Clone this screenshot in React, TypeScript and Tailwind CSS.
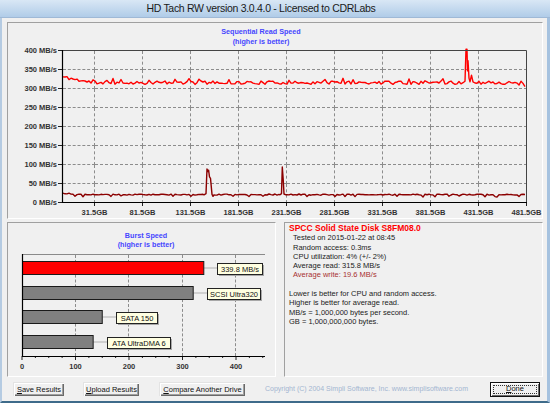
import React from 'react';

// seeded noise so the traces look the same on every load
function rng(seed: number) {
  let s = seed;
  return () => {
    s = (s + 0x6d2b79f5) | 0;
    let t = Math.imul(s ^ (s >>> 15), 1 | s);
    t = (t + Math.imul(t ^ (t >>> 7), 61 | t)) ^ t;
    return ((t ^ (t >>> 14)) >>> 0) / 4294967296;
  };
}

// page coords -> chart coords (panel content starts at 8,24)
const toY = (v: number) => 203 - v * 0.38 - 24;

function readTrace() {
  const r = rng(11);
  const pts: [number, number][] = [];
  for (let x = 63; x <= 526; x += 2) {
    if (x >= 463 && x <= 474) continue;
    let v = 314 + (r() - 0.5) * 9;
    if (x < 92) v += ((92 - x) / 29) * 15;
    if (x > 505) v -= ((x - 505) / 21) * 6;
    if (r() < 0.09) v += 6 + r() * 5;
    pts.push([x, v]);
  }
  const spike: [number, number][] = [
    [463, 314], [465, 318], [466, 402], [467, 402], [467.5, 345], [468, 372],
    [469, 326], [470, 316], [471.5, 334], [473, 316],
  ];
  return [...pts, ...spike].sort((a, b) => a[0] - b[0]);
}

function writeTrace() {
  const r = rng(5);
  const pts: [number, number][] = [];
  for (let x = 63; x <= 526; x += 2) {
    if ((x >= 204 && x <= 214) || (x >= 280 && x <= 286)) continue;
    let v = 19.5 + (r() - 0.5) * 3;
    if (x < 70) v += 3;
    if (r() < 0.07) v -= 5;
    pts.push([x, v]);
  }
  const spikes: [number, number][] = [
    [204, 19], [206, 22], [207, 87], [208, 80], [208.6, 84], [209.5, 66], [210.5, 62],
    [212, 20], [213, 15], [214, 19],
    [280, 19], [281.5, 22], [282.3, 92], [283.2, 60], [284, 21], [286, 19],
  ];
  return [...pts, ...spikes].sort((a, b) => a[0] - b[0]);
}

const path = (pts: [number, number][]) =>
  pts.map(([x, v], i) => `${i ? 'L' : 'M'}${x - 8} ${toY(v).toFixed(1)}`).join(' ');

const readPath = path(readTrace());
const writePath = path(writeTrace());

const yLabels = [400, 350, 300, 250, 200, 150, 100, 50, 0];
const xLabels = ['31.5GB', '81.5GB', '131.5GB', '181.5GB', '231.5GB', '281.5GB', '331.5GB', '381.5GB', '431.5GB', '481.5GB'];
const font = "'Liberation Sans', Arial, sans-serif";

// dashed grid cells behind the read plot: 8 rows x 10 columns
function ReadGrid() {
  const cells: React.ReactElement[] = [];
  for (let r = 0; r < 8; r++) {
    for (let c = 0; c < 10; c++) {
      const right = c < 9;
      const bottom = r < 7;
      const cls = right && bottom
        ? 'border-r border-b border-dashed border-[#8c8c8c]'
        : right
          ? 'border-r border-dashed border-[#8c8c8c]'
          : bottom
            ? 'border-b border-dashed border-[#8c8c8c]'
            : '';
      cells.push(<div key={`${r}-${c}`} className={cls} />);
    }
  }
  return (
    <div className="col-start-1 row-start-1 self-start justify-self-start ml-[55px] mt-[28px] grid grid-cols-[32px_repeat(9,48px)] grid-rows-[repeat(8,19px)]">
      {cells}
    </div>
  );
}

function ReadChart() {
  return (
    <div className="grid">
      <ReadGrid />
      <svg width={534} height={195} className="block col-start-1 row-start-1" fontFamily={font}>
        <text x={253} y={11} textAnchor="middle" fontSize={7.2} fill="#4646ff" fontWeight={600}>
          Sequential Read Speed
        </text>
        <text x={253} y={21} textAnchor="middle" fontSize={7.2} fill="#4646ff" fontWeight={600}>
          (higher is better)
        </text>

        {yLabels.map((v, i) => {
          const y = 27.5 + i * 19;
          return (
            <g key={v}>
              <text x={49} y={y} dy="0.35em" textAnchor="end" fontSize={7.5} fill="#333" fontWeight={600}>
                {v} MB/s
              </text>
              <line x1={50} x2={54} y1={y} y2={y} stroke="#222" />
            </g>
          );
        })}

        {xLabels.map((l, i) => {
          const x = 86.5 + i * 48;
          return (
            <g key={l}>
              <line x1={x} x2={x} y1={179} y2={183} stroke="#222" />
              <text x={x} y={189} dy="0.35em" textAnchor="middle" fontSize={7.5} fill="#333" fontWeight={600}>
                {l}
              </text>
            </g>
          );
        })}

        <path d={readPath} fill="none" stroke="#ff0000" strokeWidth={1.4} strokeLinejoin="round" />
        <path d={writePath} fill="none" stroke="#8b0000" strokeWidth={1.4} strokeLinejoin="round" />

        <line x1={54.5} x2={518.5} y1={27.5} y2={27.5} stroke="#444" />
        <line x1={518.5} x2={518.5} y1={27.5} y2={179.5} stroke="#444" />
        <line x1={54.5} x2={54.5} y1={27} y2={179.5} stroke="#000" strokeWidth={1.2} />
        <line x1={54} x2={519} y1={179.5} y2={179.5} stroke="#000" strokeWidth={1.2} />
      </svg>
    </div>
  );
}

// burst chart in panel coords (content origin at page 8,224)
const bx = (v: number) => 14 + v * 0.535;

const bars = [
  { v: 339.8, y: 38, fill: '#ff0000', label: '339.8 MB/s', lx: 209, lw: 45 },
  { v: 320, y: 63, fill: '#808080', label: 'SCSI Ultra320', lx: 199, lw: 53 },
  { v: 150, y: 87, fill: '#808080', label: 'SATA 150', lx: 108, lw: 41 },
  { v: 133, y: 112, fill: '#808080', label: 'ATA UltraDMA 6', lx: 99, lw: 63 },
];

function BurstChart() {
  return (
    <div className="grid">
      <div className="col-start-1 row-start-1 self-start justify-self-start ml-[15px] mt-[32px] h-[101px] flex">
        <div className="w-[53px] border-r border-dashed border-[#8c8c8c]" />
        <div className="w-[53px] border-r border-dashed border-[#8c8c8c]" />
        <div className="w-[54px] border-r border-dashed border-[#8c8c8c]" />
        <div className="w-[53px] border-r border-dashed border-[#8c8c8c]" />
      </div>
      <svg width={267} height={153} className="block col-start-1 row-start-1" fontFamily={font}>
        <text x={138} y={12} dy="0.35em" textAnchor="middle" fontSize={7.2} fill="#4646ff" fontWeight={600}>
          Burst Speed
        </text>
        <text x={138} y={21.5} dy="0.35em" textAnchor="middle" fontSize={7.2} fill="#4646ff" fontWeight={600}>
          (higher is better)
        </text>

        <line x1={14} x2={257} y1={31.5} y2={31.5} stroke="#8a8a8a" />
        {Array.from({ length: 19 }, (_, i) => i * 25).map((v) => (
          <line key={v} x1={bx(v)} x2={bx(v)} y1={133} y2={v % 100 === 0 ? 137 : 135} stroke="#222" />
        ))}
        {[0, 100, 200, 300, 400].map((v) => (
          <text key={v} x={bx(v)} y={143} dy="0.35em" textAnchor="middle" fontSize={7.5} fill="#333" fontWeight={600}>
            {v}
          </text>
        ))}

        {bars.map((b) => (
          <g key={b.label}>
            <line x1={bx(b.v)} x2={b.lx} y1={b.y + 7} y2={b.y + 7} stroke="#b0b0b0" />
            <rect x={14.5} y={b.y + 0.5} width={bx(b.v) - 14.5} height={13} fill={b.fill} stroke="#1a1a1a" />
            <rect x={b.lx + 2} y={b.y + 4} width={b.lw} height={11} fill="#a8a8a8" />
            <rect x={b.lx + 0.5} y={b.y + 2.5} width={b.lw} height={11} fill="#ffffe1" stroke="#222" />
            <text x={b.lx + b.lw / 2 + 0.5} y={b.y + 8} dy="0.35em" textAnchor="middle" fontSize={7.5} fill="#111">
              {b.label}
            </text>
          </g>
        ))}

        <line x1={14.5} x2={14.5} y1={31} y2={133.5} stroke="#000" strokeWidth={1.2} />
        <line x1={14} x2={257} y1={133.5} y2={133.5} stroke="#000" strokeWidth={1.2} />
      </svg>
    </div>
  );
}

function Btn({ first, rest, className }: { first: string; rest: string; className?: string }) {
  return (
    <div
      className={
        'h-[14px] flex items-center justify-center bg-[#f0f0f0] text-[7.5px] text-[#111] shadow-[inset_1px_1px_#fff,inset_-1px_-1px_#696969,inset_-2px_-2px_#a0a0a0] border-t border-l border-[#e3e3e3] ' +
        (className ?? '')
      }
    >
      <span>
        <span className="underline">{first}</span>
        {rest}
      </span>
    </div>
  );
}

const panel = 'border-t border-l border-[#a0a0a0] border-b border-r border-b-white border-r-white';

export default function App() {
  return (
    <div className="w-[550px] h-[403px] overflow-hidden flex flex-col bg-[#f0f0f0] font-['Liberation_Sans',Arial,sans-serif]">
      <div className="h-[18px] shrink-0 flex items-center justify-center pr-[28px] bg-gradient-to-b from-[#d9e7f5] to-[#b0cce8] border-b border-[#9fb9d6]">
        <span className="text-[10.5px] tracking-[-0.3px] text-[#1a1a1a]">HD Tach RW version 3.0.4.0 - Licensed to CDRLabs</span>
      </div>

      <div className="flex-1 flex flex-col border-l-2 border-r-[3px] border-b-2 border-l-[#b5cbe2] border-r-[#a6c2df] border-b-[#3e6b8a]">
        <div className={`ml-[5px] mt-[4px] w-[536px] h-[197px] shrink-0 ${panel}`}>
          <ReadChart />
        </div>

        <div className="mt-[3px] flex h-[155px] shrink-0">
          <div className={`ml-[5px] w-[269px] ${panel}`}>
            <BurstChart />
          </div>
          <div className={`ml-[8px] w-[259px] pl-[4px] pt-[1px] text-[7.5px] leading-[9.3px] text-[#222] ${panel}`}>
            <div className="text-[8.5px] font-bold text-[#ff0000]">SPCC Solid State Disk S8FM08.0</div>
            <div className="pl-[4px]">
              <div>Tested on 2015-01-22 at 08:45</div>
              <div>Random access: 0.3ms</div>
              <div>CPU utilization: 4% (+/- 2%)</div>
              <div>Average read: 315.8 MB/s</div>
              <div className="text-[#a83030]">Average write: 19.6 MB/s</div>
            </div>
            <div className="h-[9.3px]" />
            <div>Lower is better for CPU and random access.</div>
            <div>Higher is better for average read.</div>
            <div>MB/s = 1,000,000 bytes per second.</div>
            <div>GB = 1,000,000,000 bytes.</div>
          </div>
        </div>

        <div className="mt-[5px] flex items-center h-[14px] shrink-0">
          <Btn first="S" rest="ave Results" className="ml-[11px] w-[51px]" />
          <Btn first="U" rest="pload Results" className="ml-[19px] w-[56px]" />
          <Btn first="C" rest="ompare Another Drive" className="ml-[20px] w-[86px]" />
          <span className="ml-[20px] text-[7px] text-[#a3b6d0] whitespace-nowrap">
            Copyright (C) 2004 Simpli Software, Inc. www.simplisoftware.com
          </span>
          <div className="ml-auto mr-[7px] w-[50px] h-[15px] border border-[#111] flex">
            <div className="flex-1 flex items-center justify-center shadow-[inset_1px_1px_#fff,inset_-1px_-1px_#696969] p-[2px]">
              <div className="w-full h-full border border-dotted border-[#333] flex items-center justify-center text-[7.5px] text-[#111]">
                <span>
                  <span className="underline">D</span>one
                </span>
              </div>
            </div>
          </div>
        </div>
      </div>
    </div>
  );
}
